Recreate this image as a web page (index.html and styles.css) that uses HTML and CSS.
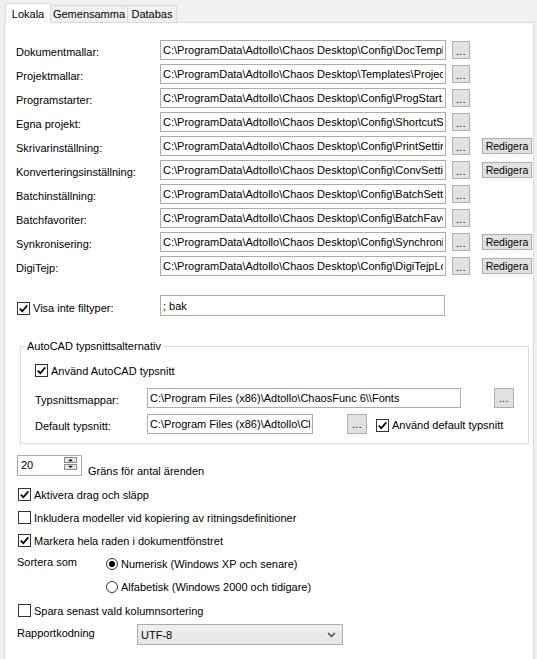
FILE: index.html
```html
<!DOCTYPE html>
<html lang="sv">
<head>
    <meta charset="UTF-8">
    <title>Alternativ - Lokala</title>
    <link rel="stylesheet" href="styles.css">
</head>
<body>

    <div class="tabs">
        <div class="tab active">Lokala</div>
        <div class="tab w-gem">Gemensamma</div>
        <div class="tab w-db">Databas</div>
    </div>

    <div class="panel">

        <div class="paths">
            <div class="row"><span class="lbl">Dokumentmallar:</span><input class="field" value="C:\ProgramData\Adtollo\Chaos Desktop\Config\DocTemplates.xml" readonly><button class="dots">...</button></div>
            <div class="row"><span class="lbl">Projektmallar:</span><input class="field" value="C:\ProgramData\Adtollo\Chaos Desktop\Templates\Projects" readonly><button class="dots">...</button></div>
            <div class="row"><span class="lbl">Programstarter:</span><input class="field" value="C:\ProgramData\Adtollo\Chaos Desktop\Config\ProgStart.xml" readonly><button class="dots">...</button></div>
            <div class="row"><span class="lbl">Egna projekt:</span><input class="field" value="C:\ProgramData\Adtollo\Chaos Desktop\Config\ShortcutSettings.xml" readonly><button class="dots">...</button></div>
            <div class="row"><span class="lbl">Skrivarinställning:</span><input class="field" value="C:\ProgramData\Adtollo\Chaos Desktop\Config\PrintSettings.xml" readonly><button class="dots">...</button><button class="edit">Redigera</button></div>
            <div class="row"><span class="lbl">Konverteringsinställning:</span><input class="field" value="C:\ProgramData\Adtollo\Chaos Desktop\Config\ConvSettings.xml" readonly><button class="dots">...</button><button class="edit">Redigera</button></div>
            <div class="row"><span class="lbl">Batchinställning:</span><input class="field" value="C:\ProgramData\Adtollo\Chaos Desktop\Config\BatchSettings.xml" readonly><button class="dots">...</button></div>
            <div class="row"><span class="lbl">Batchfavoriter:</span><input class="field" value="C:\ProgramData\Adtollo\Chaos Desktop\Config\BatchFavorites.xml" readonly><button class="dots">...</button></div>
            <div class="row"><span class="lbl">Synkronisering:</span><input class="field" value="C:\ProgramData\Adtollo\Chaos Desktop\Config\Synchronization.xml" readonly><button class="dots">...</button><button class="edit">Redigera</button></div>
            <div class="row"><span class="lbl">DigiTejp:</span><input class="field" value="C:\ProgramData\Adtollo\Chaos Desktop\Config\DigiTejpLogs.xml" readonly><button class="dots">...</button><button class="edit">Redigera</button></div>
        </div>

        <div class="filter">
            <span class="check filter-check"><span class="cb on"><svg viewBox="0 0 11 11"><path d="M1.8 5.6 L4.3 8.2 L9.3 2.4"/></svg></span>Visa inte filtyper:</span>
            <input class="field filter-field" value="; bak" readonly>
        </div>

        <fieldset class="group">
            <legend>AutoCAD typsnittsalternativ</legend>
            <div class="check g-check"><span class="cb on"><svg viewBox="0 0 11 11"><path d="M1.8 5.6 L4.3 8.2 L9.3 2.4"/></svg></span>Använd AutoCAD typsnitt</div>
            <div class="grow">
                <span class="glbl">Typsnittsmappar:</span>
                <input class="field font-dir" value="C:\Program Files (x86)\Adtollo\ChaosFunc 6\\Fonts" readonly>
                <button class="dots big dir-btn">...</button>
            </div>
            <div class="grow second">
                <span class="glbl">Default typsnitt:</span>
                <input class="field font-def" value="C:\Program Files (x86)\Adtollo\ChaosFunc 6\\Fonts\txt.shx" readonly>
                <button class="dots big def-btn">...</button>
                <span class="check def-check"><span class="cb on"><svg viewBox="0 0 11 11"><path d="M1.8 5.6 L4.3 8.2 L9.3 2.4"/></svg></span>Använd default typsnitt</span>
            </div>
        </fieldset>

        <div class="limit">
            <div class="spin">
                <span class="spin-val">20</span>
                <span class="arrows">
                    <span class="arr"><svg viewBox="0 0 11 6"><path d="M2 5 L5.5 1.5 L9 5 Z"/></svg></span>
                    <span class="arr"><svg viewBox="0 0 11 6"><path d="M2 1 L5.5 4.5 L9 1 Z"/></svg></span>
                </span>
            </div>
            <span class="limit-lbl">Gräns för antal ärenden</span>
        </div>

        <div class="check opt"><span class="cb on"><svg viewBox="0 0 11 11"><path d="M1.8 5.6 L4.3 8.2 L9.3 2.4"/></svg></span>Aktivera drag och släpp</div>
        <div class="check opt"><span class="cb"></span>Inkludera modeller vid kopiering av ritningsdefinitioner</div>
        <div class="check opt"><span class="cb on"><svg viewBox="0 0 11 11"><path d="M1.8 5.6 L4.3 8.2 L9.3 2.4"/></svg></span>Markera hela raden i dokumentfönstret</div>

        <div class="sort">
            <span class="sort-lbl">Sortera som</span>
            <span class="radio-item"><span class="radio on"></span>Numerisk (Windows XP och senare)</span>
        </div>
        <div class="sort">
            <span class="sort-lbl"></span>
            <span class="radio-item"><span class="radio"></span>Alfabetisk (Windows 2000 och tidigare)</span>
        </div>

        <div class="check opt"><span class="cb"></span>Spara senast vald kolumnsortering</div>

        <div class="encoding">
            <span class="enc-lbl">Rapportkodning</span>
            <div class="select">
                <span>UTF-8</span>
                <svg class="chev" viewBox="0 0 9 6"><path d="M1 1 L4.5 4.5 L8 1"/></svg>
            </div>
        </div>

    </div>

</body>
</html>
```

FILE: styles.css
```css
html, body { margin: 0; height: 659px; overflow: hidden; }
body { background: #f0f0f0; font-family: "Liberation Sans", Arial, sans-serif; font-size: 11px; color: #000; }

/* tabs */
.tabs { display: flex; align-items: flex-end; height: 19px; padding-top: 3px; margin-left: 5px; position: relative; z-index: 1; }
.tab { height: 17px; box-sizing: border-box; border: 1px solid #d9d9d9; border-bottom: none; background: #f0f0f0; margin-left: -1px; text-align: center; line-height: 17px; }
.tab.active { width: 46px; height: 20px; margin-left: 0; margin-bottom: -1px; background: #fff; line-height: 20px; }
.w-gem { width: 78px; }
.w-db { width: 50px; }

/* page */
.panel { margin-left: 4px; width: 530px; min-height: 640px; border: 1px solid #d9d9d9; background: #fff; padding: 17px 0 0 11px; box-sizing: border-box; }

.field { height: 20px; box-sizing: border-box; border: 1px solid #adadad; padding: 0 2px; margin: 0; font: inherit; color: #000; background: #fff; outline: none; }

button { font: inherit; color: #000; margin: 0; padding: 0; background: #e1e1e1; border: 1px solid #adadad; box-sizing: border-box; overflow: visible; }
.dots { width: 18px; height: 18px; margin-left: 6px; line-height: 20px; font-size: 10px; letter-spacing: 0.5px; }
.edit { width: 50px; height: 16px; margin-left: 12px; line-height: 14px; font-size: 10.5px; text-align: center; }

.paths { display: flex; flex-direction: column; gap: 4px; }
.row { display: flex; align-items: center; height: 20px; }
.lbl { width: 144px; padding-top: 4px; }
.row .field { width: 286px; }

/* filter */
.filter { display: flex; align-items: center; height: 21px; margin-top: 19px; }
.filter-check { width: 143px; margin-left: 1px; padding-top: 5px; }
.filter-field { width: 285px; height: 21px; }

.check { display: flex; align-items: center; gap: 3px; }
.cb { width: 13px; height: 13px; box-sizing: border-box; border: 1px solid #333; background: #fff; display: inline-flex; flex: none; }
.cb svg { width: 11px; height: 11px; }
.cb svg path { fill: none; stroke: #000; stroke-width: 1.7; }

/* AutoCAD group */
.group { margin: 23px 0 0 4px; width: 509px; box-sizing: border-box; border: 1px solid #dcdcdc; padding: 10px 0 9px 14px; }
.group legend { padding: 0 2px; margin-left: -10px; line-height: 14px; }
.g-check { height: 15px; }
.grow { display: flex; align-items: center; height: 20px; margin-top: 10px; }
.grow.second { margin-top: 6px; }
.glbl { width: 112px; padding-top: 3px; }
.font-dir { width: 314px; }
.font-def { width: 166px; }
.dots.big { width: 20px; height: 20px; }
.dir-btn { margin-left: 33px; }
.def-btn { margin-left: 34px; }
.def-check { margin-left: 9px; padding-top: 2px; }

/* limit */
.limit { display: flex; align-items: flex-end; margin-top: 11px; }
.spin { width: 65px; height: 21px; margin-left: 1px; box-sizing: border-box; border: 1px solid #adadad; display: flex; justify-content: space-between; }
.spin-val { padding: 3px 0 0 3px; }
.arrows { display: flex; flex-direction: column; gap: 1px; margin: 1px 4px 0 0; }
.arr { width: 13px; height: 6px; box-sizing: border-box; border: 1px solid #8c8c8c; background: #e6e6e6; display: flex; }
.arr svg { width: 11px; height: 4px; }
.arr svg path { fill: #000; }
.limit-lbl { margin-left: 6px; line-height: 12px; margin-bottom: -1px; }

.opt { height: 23px; margin-left: 2px; }
.limit + .opt { margin-top: 7px; }

/* sorting */
.sort { display: flex; align-items: center; height: 23px; margin-left: 1px; }
.sort + .sort { height: 24px; }
.sort-lbl { width: 89px; padding-bottom: 3px; }
.radio-item { display: flex; align-items: center; gap: 3px; }
.radio { width: 12px; height: 12px; box-sizing: border-box; border: 1px solid #333; border-radius: 50%; background: #fff; display: flex; align-items: center; justify-content: center; }
.radio.on::after { content: ""; width: 6px; height: 6px; border-radius: 50%; background: #000; }

/* encoding */
.encoding { display: flex; align-items: center; margin-top: 2px; margin-left: 1px; }
.enc-lbl { width: 120px; padding-bottom: 4px; }
.select { width: 206px; height: 21px; box-sizing: border-box; border: 1px solid #acacac; background: linear-gradient(#f0f0f0, #e5e5e5); display: flex; align-items: center; justify-content: space-between; padding: 1px 6px 0 3px; }
.chev { width: 9px; height: 6px; }
.chev path { fill: none; stroke: #444; stroke-width: 1.4; }
```
